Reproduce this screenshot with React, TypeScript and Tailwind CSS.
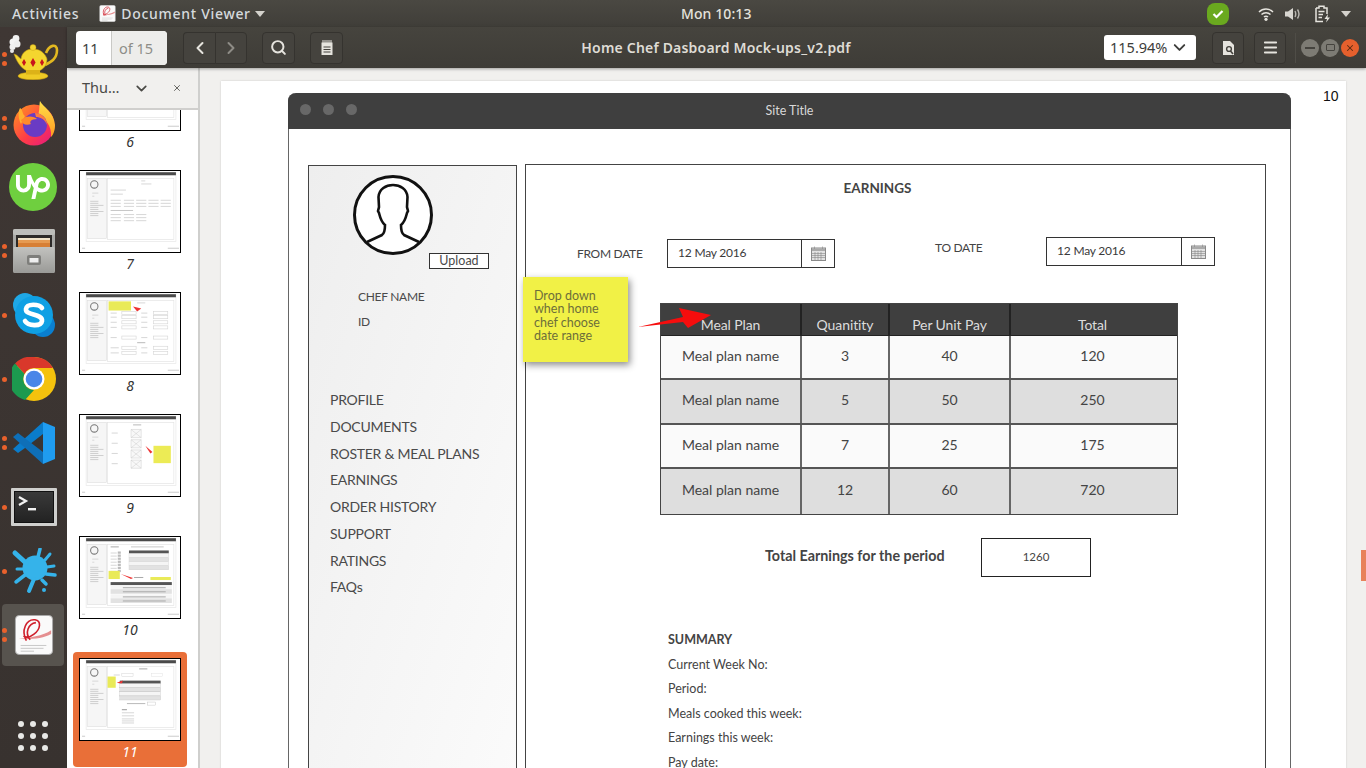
import React from "react";
import { ChevronLeft, ChevronRight, ChevronDown, Search, Menu, X } from "lucide-react";
import { SiUpwork } from "react-icons/si";

const Dots = ({ n }: { n: number }) => (
  <div className="absolute left-[2px] top-0 bottom-0 flex flex-col justify-center gap-[4px]">
    {Array.from({ length: n }).map((_, i) => (
      <span key={i} className="block w-[5px] h-[5px] rounded-full bg-[#e9612c]" />
    ))}
  </div>
);

const Teapot = () => (
  <svg width="50" height="45" viewBox="0 0 50 45" className="mb-[3px]">
    <path d="M37 18 C40 10 48 8 48 15 C48 24 42 27 36 30" fill="none" stroke="#e3b820" strokeWidth="2.6" />
    <path d="M5 19 C9 20 10 23 12 24 C13 17 18 14 24 14 C31 14 36 18 38 24 C38 32 32 37 24 37 C15 37 9 30 5 19Z" fill="#f4d62f" stroke="#c49a10" strokeWidth=".6" />
    <ellipse cx="24" cy="41" rx="15" ry="3.8" fill="#efca25" stroke="#c49a10" strokeWidth=".6" />
    <rect x="17" y="35" width="14" height="4.5" fill="#dcb218" />
    <circle cx="24" cy="12.5" r="3" fill="#f2d432" stroke="#c49a10" strokeWidth=".4" />
    <path d="M15 24l2 3.5-2 3.5-2-3.5zM24 23l2.6 4.5-2.6 4.5-2.6-4.5zM33 24l2 3.5-2 3.5-2-3.5z" fill="#c8141c" />
    <circle cx="7" cy="3.5" r="3.4" fill="#f2f2f2" /><circle cx="4" cy="7" r="3.5" fill="#f4f4f4" /><circle cx="8" cy="9" r="3.5" fill="#eee" /><circle cx="3.5" cy="12" r="3" fill="#f0f0f0" /><circle cx="3" cy="16" r="2" fill="#e8e8e8" />
  </svg>
);

const Firefox = () => (
  <svg width="44" height="46" viewBox="0 0 44 46">
    <defs>
      <linearGradient id="ff" x1="0" y1="0" x2="1" y2="1"><stop offset="0" stopColor="#ff9a1f" /><stop offset=".55" stopColor="#ff3d46" /><stop offset="1" stopColor="#e31587" /></linearGradient>
      <linearGradient id="ffy" x1="0" y1="0" x2="0" y2="1"><stop offset="0" stopColor="#ffe14a" /><stop offset="1" stopColor="#ff9a1f" /></linearGradient>
    </defs>
    <circle cx="22" cy="25" r="20.5" fill="url(#ff)" />
    <path d="M28 1 C31 7 42 12 43 25 C43 31 41 35 39 37 C40 26 33 18 26 15 C28 10 27 5 28 1Z" fill="url(#ffy)" />
    <path d="M8 8 C11 10 10 14 13 16 L9 24 C6 18 6 12 8 8Z" fill="#ffb02e" />
    <circle cx="23" cy="25" r="12" fill="#6a3bc4" />
    <path d="M9 20 C14 15 22 16 25 19 C19 19 17 22 19 24 C14 26 10 24 9 20Z" fill="#ff8a2b" />
    <path d="M23 13 C30 13 35 19 35 25 C33 19 28 17 24 17Z" fill="#ff7a3d" />
  </svg>
);

const Upwork = () => (
  <div className="w-[48px] h-[48px] -ml-[1px] rounded-full bg-[#6fcf3f] flex items-center justify-center">
    <SiUpwork size={34} color="#fff" />
  </div>
);

const Files = () => (
  <svg width="42" height="44" viewBox="0 0 42 44">
    <defs>
      <linearGradient id="fd" x1="0" y1="0" x2="0" y2="1"><stop offset="0" stopColor="#c2c2bf" /><stop offset="1" stopColor="#9a9a97" /></linearGradient>
    </defs>
    <rect x="0" y="0" width="42" height="44" rx="2" fill="#a9a9a6" />
    <rect x="0" y="0" width="42" height="6" rx="2" fill="#bdbdba" />
    <rect x="3" y="6" width="36" height="13" fill="#2d2a28" />
    <rect x="5" y="9" width="32" height="2" fill="#f0e2c8" />
    <rect x="5" y="11" width="32" height="3" fill="#e59a52" />
    <rect x="5" y="14" width="32" height="5" fill="#d77f35" />
    <rect x="0.5" y="18" width="41" height="26" rx="1" fill="url(#fd)" />
    <rect x="14" y="26" width="14" height="10" rx="2" fill="#7e7e7b" />
    <rect x="16.5" y="29" width="9" height="4.5" fill="#eee" />
  </svg>
);

const Skype = () => (
  <svg width="44" height="44" viewBox="0 0 44 44">
    <circle cx="13" cy="12" r="12" fill="#1fa8e6" /><circle cx="31" cy="32" r="12" fill="#0a7fd0" />
    <circle cx="22" cy="22" r="19" fill="#0fa0e4" />
    <path d="M30 15 C27 11 15 10 14 16 C13 23 31 20 30 28 C29 34 16 33 13 28" fill="none" stroke="#fff" strokeWidth="4.6" strokeLinecap="round" />
  </svg>
);

const Chrome = () => (
  <svg width="44" height="44" viewBox="0 0 44 44">
    <circle cx="22" cy="22" r="22" fill="#f4c20d" />
    <path d="M22 0 A22 22 0 0 1 41 11 L22 11 A11 11 0 0 0 12.5 17 L3 6.5 A22 22 0 0 1 22 0Z" fill="#d9382b" />
    <path d="M3 6.5 L12.5 17 A11 11 0 0 0 22 33 L13 43 A22 22 0 0 1 3 6.5Z" fill="#1c9a4f" />
    <circle cx="22" cy="22" r="10.5" fill="#fff" /><circle cx="22" cy="22" r="8.3" fill="#4a86e8" />
  </svg>
);

const VSCode = () => (
  <svg width="42" height="42" viewBox="0 0 42 42">
    <path d="M30 0 L42 5 L42 37 L30 42 L30 30 L30 12Z" fill="#1f9cf0" />
    <path d="M30 0 L30 12 L12 26 L5 31 L0 27 L30 0Z" fill="#0a7ccb" />
    <path d="M0 15 L5 11 L30 30 L30 42 L0 15Z" fill="#0e6fb8" />
  </svg>
);

const Terminal = () => (
  <svg width="46" height="38" viewBox="0 0 46 38">
    <defs>
      <linearGradient id="tm" x1="0" y1="0" x2="0" y2="1"><stop offset="0" stopColor="#3a3a3a" /><stop offset="1" stopColor="#222" /></linearGradient>
    </defs>
    <rect width="46" height="38" rx="1" fill="#cfcfcd" />
    <rect x="3.5" y="3.5" width="39" height="31" fill="url(#tm)" stroke="#111" />
    <path d="M8 9 L15 13 L8 17" fill="none" stroke="#f2f2f2" strokeWidth="2.2" />
    <rect x="17" y="20" width="8" height="2.4" fill="#f2f2f2" />
  </svg>
);

const Splash = () => (
  <svg width="46" height="46" viewBox="0 0 46 46">
    <circle cx="24" cy="20" r="12.5" fill="#35b3ea" />
    <g stroke="#35b3ea" strokeLinecap="round" fill="none">
      <path d="M15 15 L4 5" strokeWidth="5" /><path d="M27 9 L29 1" strokeWidth="3.5" /><path d="M34 12 L39 6" strokeWidth="3" /><path d="M36 19 L43 18" strokeWidth="3" /><path d="M35 26 L44 27" strokeWidth="3.5" /><path d="M31 32 L35 36" strokeWidth="3.5" /><path d="M23 31 L18 43" strokeWidth="4" /><path d="M14 27 L5 34" strokeWidth="3.5" /><path d="M12 21 L6 21" strokeWidth="3" />
    </g>
    <circle cx="33" cy="42" r="2" fill="#35b3ea" />
  </svg>
);

const Evince = ({ size = 40 }: { size?: number }) => (
  <svg width={size} height={size} viewBox="0 0 40 42">
    <rect x=".5" y=".5" width="39" height="41" rx="4" fill="#fafafa" stroke="#aaa" />
    <path d="M4 25 C14 24 30 22 38 16 L38 20 C30 25 14 26 4 25Z" fill="#e58f90" />
    <path d="M12 27 C6 16 12 4 21 5 C28 6 27 15 20 20 C15 24 12 24 9 22 M22 8 C14 9 10 19 16 26" fill="none" stroke="#cf1f2b" strokeWidth="1.7" />
    <path d="M6 32 H33 M6 35 H30 M6 38 H20" stroke="#c6c6c6" />
  </svg>
);

const DockItem = ({ dots, active, children }: { dots: number; active?: boolean; children: React.ReactNode }) => (
  <div className="relative flex items-center justify-center h-[64px] w-full">
    {active && <div className="absolute left-[2px] right-[3px] top-[1px] bottom-[1px] rounded-[4px] bg-[#57534e]" />}
    <div className="relative flex items-center justify-center">{children}</div>
    {dots > 0 && <Dots n={dots} />}
  </div>
);

const Dock = () => (
  <aside className="w-[67px] shrink-0 h-full bg-linear-to-b from-[#3f3734] to-[#38322f] flex flex-col">
    <DockItem dots={2}><Teapot /></DockItem>
    <DockItem dots={2}><Firefox /></DockItem>
    <DockItem dots={0}><Upwork /></DockItem>
    <DockItem dots={2}><Files /></DockItem>
    <DockItem dots={1}><Skype /></DockItem>
    <DockItem dots={1}><Chrome /></DockItem>
    <DockItem dots={2}><VSCode /></DockItem>
    <DockItem dots={1}><Terminal /></DockItem>
    <DockItem dots={1}><Splash /></DockItem>
    <DockItem dots={2} active><Evince /></DockItem>
    <div className="mt-auto mb-[17px] grid grid-cols-3 gap-[6px] w-[30px] ml-[18px]">
      {Array.from({ length: 9 }).map((_, i) => (
        <span key={i} className="block w-[6px] h-[6px] rounded-full bg-[#e8e8e6]" />
      ))}
    </div>
  </aside>
);

const TopBar = () => (
  <header className="h-[27px] shrink-0 bg-linear-to-b from-[#4a4842] to-[#403e39] flex items-center text-[#dfdbd2] text-[14px] font-medium tracking-[0.7px] font-['Noto_Sans',sans-serif] relative">
    <span className="ml-[12px] text-[#d6dadd]">Activities</span>
    <span className="ml-[20px] flex items-center"><span className="block w-[17px] h-[17px]"><Evince size={17} /></span></span>
    <span className="ml-[5px] text-[#d6dadd]">Document Viewer</span>
    <svg width="10" height="6" viewBox="0 0 10 6" className="ml-[4px]"><path d="M0 0H10L5 6Z" fill="#d4d2cc" /></svg>
    <span className="absolute left-[681px] tracking-[0.1px] text-[#e4e2dc]">Mon 10:13</span>
    <div className="ml-auto flex items-center">
      <span className="w-[22px] h-[22px] rounded-[8px] bg-[#6aa91f] flex items-center justify-center">
        <svg width="12" height="10" viewBox="0 0 12 10"><path d="M1.5 5 L4.5 8 L10.5 2" fill="none" stroke="#fff" strokeWidth="2.2" /></svg>
      </span>
      <svg width="16" height="14" viewBox="0 0 16 14" className="ml-[29px]">
        <path d="M1 5 C5 1 11 1 15 5 M3.5 7.5 C6 5 10 5 12.5 7.5 M6 10 C7 9 9 9 10 10" fill="none" stroke="#e6e4de" strokeWidth="1.5" />
        <circle cx="8" cy="12.3" r="1.6" fill="#e6e4de" />
      </svg>
      <svg width="16" height="14" viewBox="0 0 16 14" className="ml-[11px]">
        <path d="M0 4.5H3L8 1V13L3 9.5H0Z" fill="#d8d6d0" />
        <path d="M10 4 C11 6 11 8 10 10 M12.5 2.5 C14.5 5.5 14.5 8.5 12.5 11.5" fill="none" stroke="#b9b7b1" strokeWidth="1.4" />
      </svg>
      <svg width="16" height="18" viewBox="0 0 16 18" className="ml-[14px]">
        <path d="M1 3H4V1.2H9V3H12V9M1 3V16.5H8" fill="none" stroke="#e6e4de" strokeWidth="1.5" />
        <path d="M3.5 6.5H9.5M3.5 9.5H8M3.5 12.5H7" stroke="#e6e4de" strokeWidth="1.3" />
        <path d="M13 9 L9.5 14 H12 L11 17.5 L15 12.5 H12.5Z" fill="#e6e4de" />
      </svg>
      <svg width="10" height="6" viewBox="0 0 10 6" className="ml-[10px] mr-[15px]"><path d="M0 0H10L5 6Z" fill="#d4d2cc" /></svg>
    </div>
  </header>
);

const ToolBtn = ({ className = "", children }: { className?: string; children: React.ReactNode }) => (
  <div className={"h-[32px] rounded-[4px] border border-[#35332f] bg-[#45433e] flex items-center justify-center " + className}>{children}</div>
);

const Toolbar = () => (
  <div className="h-[41px] shrink-0 bg-linear-to-b from-[#46443e] to-[#3e3c37] flex items-center font-['Noto_Sans',sans-serif] relative z-20 shadow-[0_1px_3px_rgba(0,0,0,0.35)] text-[#e6e4de]">
    <div className="ml-[9px] w-[91px] h-[34px] rounded-[4px] bg-white flex overflow-hidden text-[14.5px]">
      <span className="w-[36px] pl-[6px] leading-[34px] text-[#3d3d3a] border-r border-[#c9c9c6]">11</span>
      <span className="flex-1 pl-[7px] leading-[34px] bg-[#ededeb] text-[#8d8d88]">of 15</span>
    </div>
    <div className="ml-[16px] flex">
      <ToolBtn className="w-[32px] rounded-r-none border-r-0"><ChevronLeft size={20} strokeWidth={2.4} /></ToolBtn>
      <ToolBtn className="w-[32px] rounded-l-none"><ChevronRight size={20} strokeWidth={2.4} color="#8e8c86" /></ToolBtn>
    </div>
    <ToolBtn className="ml-[15px] w-[33px]"><Search size={17} strokeWidth={2.8} /></ToolBtn>
    <ToolBtn className="ml-[15px] w-[33px]">
      <svg width="14" height="16" viewBox="0 0 14 16"><path d="M1.5 2.5H12.5V15H1.5Z" fill="#e6e4de" /><path d="M3 0V4M5 0V4M7 0V4M9 0V4M11 0V4" stroke="#e6e4de" /><path d="M3.5 7H10.5M3.5 9.5H10.5M3.5 12H10.5" stroke="#45433e" /></svg>
    </ToolBtn>
    <span className="absolute left-[449px] w-[400px] whitespace-nowrap text-center text-[#dfdcd5] text-[14px] font-semibold tracking-[0.2px]">Home Chef Dasboard Mock-ups_v2.pdf</span>
    <div className="ml-auto flex items-center">
      <div className="w-[92px] h-[25px] bg-white rounded-[3px] flex items-center pl-[6px] pr-[7px] text-[14.5px] text-[#3d3d3a]">
        <span>115.94%</span><ChevronDown size={19} strokeWidth={2.4} className="ml-auto" />
      </div>
      <ToolBtn className="ml-[16px] w-[32px]">
        <svg width="13" height="16" viewBox="0 0 13 16"><path d="M1 1H8L12 5V15H1Z" fill="#e6e4de" /><circle cx="7" cy="9" r="2.4" fill="none" stroke="#45433e" strokeWidth="1.4" /><path d="M8.5 11 L11 14" stroke="#45433e" strokeWidth="1.6" /></svg>
      </ToolBtn>
      <ToolBtn className="ml-[10px] w-[32px]"><Menu size={17} strokeWidth={2.6} /></ToolBtn>
      <span className="ml-[9px] w-px h-[30px] bg-[#4f4d47]" />
      <span className="ml-[5px] w-[18px] h-[18px] rounded-full bg-[#7d7b74] flex items-center justify-center"><span className="block w-[10px] h-[2px] bg-[#45433e]" /></span>
      <span className="ml-[2px] w-[18px] h-[18px] rounded-full bg-[#7d7b74] flex items-center justify-center"><span className="block w-[9px] h-[7px] border border-[#45433e] rounded-[1px]" /></span>
      <span className="ml-[2px] mr-[7px] w-[18px] h-[18px] rounded-full bg-[#e5602d] flex items-center justify-center"><X size={10} strokeWidth={2.5} color="#5a2a12" /></span>
    </div>
  </div>
);

const R = ({ x, y, w, h = 1, c = "#d8d8d8" }: { x: number; y: number; w: number; h?: number; c?: string }) => (
  <rect x={x} y={y} width={w} height={h} fill={c} />
);

const ThumbBody = ({ n }: { n: number }) => {
  if (n === 7)
    return (
      <g>
        <R x={60} y={9} w={4} /><R x={60} y={12} w={10} />
        <R x={30} y={18} w={15} /><R x={30} y={22} w={12} />
        {[28, 31, 34].map((y) => <g key={y}>{[30, 43, 55, 67, 79].map((x) => <R key={x} x={x} y={y} w={10} />)}</g>)}
        <R x={30} y={38} w={22} c="#c8c8c8" />
        {[42, 45, 48].map((y) => <g key={y}>{[30, 43, 55].map((x) => <R key={x} x={x} y={y} w={10} />)}</g>)}
      </g>
    );
  if (n === 8)
    return (
      <g>
        <rect x="28" y="8" width="22" height="9" fill="#e9ea58" />
        <path d="M52 13 L60 15 L56 18Z" fill="#e33" />
        <R x={56} y={9} w={8} />
        {[19, 23, 28, 33, 43].map((y) => <g key={y}><R x={30} y={y} w={6} /><rect x="41" y={y - 1} width="14" height="3" fill="none" stroke="#d5d5d5" strokeWidth=".6" /><R x={60} y={y} w={6} /><rect x="72" y={y - 1} width="14" height="3" fill="none" stroke="#d5d5d5" strokeWidth=".6" /></g>)}
        <R x={56} y={48} w={8} c="#bbb" />
        {[53, 58].map((y) => <g key={y}><R x={30} y={y} w={8} /><rect x="41" y={y - 1} width="14" height="3" fill="none" stroke="#d5d5d5" strokeWidth=".6" /><R x={60} y={y} w={6} /><rect x="72" y={y - 1} width="14" height="3" fill="none" stroke="#d5d5d5" strokeWidth=".6" /></g>)}
      </g>
    );
  if (n === 9)
    return (
      <g>
        <R x={52} y={9} w={8} c="#bbb" />
        {[14, 24, 34, 44].map((y) => (
          <g key={y}>
            <R x={31} y={y + 3} w={6} />
            <path d={`M50 ${y}h10v8h-10zM50 ${y}l10 8M60 ${y}l-10 8`} fill="#f8f8f8" stroke="#c4c4c4" strokeWidth=".4" />
          </g>
        ))}
        <path d="M64 30 L71 36 L69 37.5Z" fill="#e33" />
        <rect x="72" y="30" width="17" height="17" fill="#eceb55" />
      </g>
    );
  if (n === 10)
    return (
      <g>
        <R x={30} y={9} w={8} c="#aaa" />
        {[15, 18, 21, 24, 27, 30, 33].map((y) => <g key={y}><R x={30} y={y} w={6} /><rect x="37" y={y - 1} width="3" height="2.2" fill="#bbb" /></g>)}
        <R x={50} y={9} w={32} c="#c8c8c8" />
        <rect x="48" y="13" width="39" height="3" fill="#555" />
        {[16, 20, 24, 28].map((y, i) => <rect key={y} x="48" y={y} width="39" height="4" fill={i % 2 ? "#e2e2e2" : "#f5f5f5"} stroke="#ccc" strokeWidth=".3" />)}
        <rect x="28" y="33" width="11" height="8" fill="#e9ea58" />
        <path d="M40 36 L52 40 L50 41Z" fill="#e33" />
        <R x={53} y={39} w={9} c="#aaa" />
        <rect x="69" y="39" width="20" height="3" fill="#e9ea58" />
        <rect x="30" y="44" width="60" height="3" fill="#555" />
        {[47, 51, 56, 60].map((y, i) => <g key={y}><rect x="30" y={y} width="60" height="4.5" fill={i % 2 ? "#e2e2e2" : "#f5f5f5"} /><R x={42} y={y + 2} w={42} c="#aaa" /></g>)}
      </g>
    );
  if (n === 11)
    return (
      <g>
        <R x={58} y={9} w={8} c="#aaa" />
        <R x={33} y={15} w={6} /><rect x="41" y="14" width="11" height="3" fill="#fff" stroke="#ccc" strokeWidth=".4" />
        <rect x="70" y="14" width="11" height="3" fill="#fff" stroke="#ddd" strokeWidth=".4" />
        <rect x="27" y="17" width="8" height="11" fill="#e9ea58" />
        <rect x="39" y="21" width="40" height="3" fill="#555" />
        <path d="M36 23 L42 21 L41 24Z" fill="#e33" />
        {[24, 28, 32, 36].map((y, i) => <rect key={y} x="39" y={y} width="40" height="4" fill={i % 2 ? "#e2e2e2" : "#f5f5f5"} stroke="#bbb" strokeWidth=".3" />)}
        <R x={46} y={43} w={18} c="#bbb" /><rect x="66" y="42" width="8" height="3" fill="#fff" stroke="#bbb" strokeWidth=".4" />
        <R x={41} y={49} w={5} c="#999" />{[52, 55, 58, 60, 62].map((y) => <R key={y} x={41} y={y} w={12} />)}
      </g>
    );
  return null;
};

const Thumb = ({ n, active }: { n: number; active?: boolean }) => (
  <div className={"mx-[6px] w-[114px] h-[115px] rounded-[4px] pt-[6px] " + (active ? "bg-[#e96f38]" : "")}>
    <div className="mx-[6px] w-[102px] h-[83px] border border-black bg-white overflow-hidden">
      <svg width="100" height="81" viewBox="0 0 98 79" className="block blur-[0.4px]">
        <rect x="6" y="1" width="88" height="68" fill="#fff" stroke="#e8e8e8" strokeWidth=".7" />
        <rect x="6" y="1" width="88" height="3" fill="#4a4a4a" />
        <rect x="7" y="7" width="19" height="59" fill="#f6f6f6" stroke="#d8d8d8" strokeWidth=".5" />
        <rect x="27" y="7" width="65" height="60" fill="#fff" stroke="#e0e0e0" strokeWidth=".6" />
        <circle cx="14" cy="13" r="3.6" fill="none" stroke="#777" />
        <R x={12} y={21} w={6} /><R x={12} y={24} w={2} />
        {[29, 31, 33, 35, 37, 39, 41, 43].map((y, i) => <R key={y} x={10} y={y} w={i % 3 === 2 ? 13 : 8} c="#cfcfcf" />)}
        <R x={2} y={75} w={3} c="#ccc" /><R x={86} y={75} w={11} c="#ccc" />
        <ThumbBody n={n} />
      </svg>
    </div>
    <div className={"h-[26px] text-center italic text-[14px] leading-[22px] font-['Noto_Sans',sans-serif] " + (active ? "text-white" : "text-[#333]")}>{n}</div>
  </div>
);

const Sidebar = () => (
  <div className="w-[133px] shrink-0 h-full bg-white border-r-2 border-[#cfcfcd] flex flex-col overflow-hidden">
    <div className="relative z-10 h-[42px] shrink-0 bg-[#f1f0ee] border-b-2 border-[#d0cfcd] flex items-center text-[#4a4a46] font-['Noto_Sans',sans-serif] text-[14.5px]">
      <span className="ml-[15px]">Thu…</span>
      <ChevronDown size={17} strokeWidth={2.4} className="ml-[14px]" />
      <X size={10} strokeWidth={2} className="ml-[22px]" />
    </div>
    <div className="-mt-[68px] flex flex-col gap-[7px]">
      {[6, 7, 8, 9, 10, 11].map((n) => <Thumb key={n} n={n} active={n === 11} />)}
    </div>
  </div>
);

const Avatar = () => (
  <svg width="80" height="80" viewBox="0 0 80 80" className="block">
    <circle cx="40" cy="40" r="38.5" fill="#fff" stroke="#111" strokeWidth="3" />
    <path d="M14 67 L29 60 C32 58 32 54 32 50 C28 47 27 42 26 38 L25 36 L26 32 L25.5 22 C26 14 33 10 40 10 C47 10 54 14 54.5 22 L54 32 L55 36 L54 38 C53 42 52 47 48 50 C48 54 48 58 51 60 L66 67" fill="none" stroke="#111" strokeWidth="2.6" />
  </svg>
);

const menu = ["PROFILE", "DOCUMENTS", "ROSTER & MEAL PLANS", "EARNINGS", "ORDER HISTORY", "SUPPORT", "RATINGS", "FAQs"];

const LeftPanel = () => (
  <div className="w-[209px] h-[640px] mt-[1px] shrink-0 border border-[#444] bg-linear-to-br from-[#eeeeee] to-[#fbfbfb] flex flex-col text-[#4a4a4a]">
    <div className="ml-[44px] mt-[9px]"><Avatar /></div>
    <div className="-mt-[2px] ml-[120px] w-[60px] h-[16px] border border-[#333] bg-white text-[12.5px] leading-[14px] text-center">Upload</div>
    <div className="mt-[20px] ml-[49px] text-[12px] tracking-[-0.3px] leading-[16px]">CHEF NAME</div>
    <div className="mt-[9px] ml-[49px] text-[12px] tracking-[-0.3px] leading-[16px]">ID</div>
    <div className="mt-[57px] ml-[21px] flex flex-col text-[14px] tracking-[-0.25px] leading-[26.75px]">
      {menu.map((m) => <span key={m}>{m}</span>)}
    </div>
  </div>
);

const CalIcon = () => (
  <svg width="15" height="15" viewBox="0 0 15 15">
    <rect x=".5" y="2" width="14" height="12.5" fill="#e2e2e2" stroke="#8a8a8a" />
    <rect x="1" y="2.5" width="13" height="2.5" fill="#aaa" />
    <path d="M3.5 0.5V3M11.5 0.5V3M1 7.5H14M1 9.5H14M1 11.5H14M4 6V14M7 6V14M10 6V14" stroke="#888" strokeWidth=".6" />
  </svg>
);

const DateBox = ({ className }: { className: string }) => (
  <div className={"h-[29px] border border-[#333] bg-white flex items-center text-[12px] tracking-[-0.2px] text-[#3a3a3a] " + className}>
    <span className="ml-[10px] pb-[2px]">12 May 2016</span>
    <div className="ml-auto w-[33px] h-full border-l border-[#333] flex items-center justify-center"><CalIcon /></div>
  </div>
);

const rows = [
  { h: "h-[44px]", bg: "bg-[#fafafa]", v: ["Meal plan name", "3", "40", "120"] },
  { h: "h-[45px]", bg: "bg-[#dedede]", v: ["Meal plan name", "5", "50", "250"] },
  { h: "h-[44px]", bg: "bg-[#fafafa]", v: ["Meal plan name", "7", "25", "175"] },
  { h: "h-[45px]", bg: "bg-[#dedede]", v: ["Meal plan name", "12", "60", "720"] },
];
const cols = ["w-[141px]", "w-[88px]", "w-[121px]", "flex-1 pr-[3px]"];

const Table = () => (
  <div className="ml-[134px] mt-[35px] w-[518px] border border-[#444] text-[14px] text-[#444]">
    <div className="h-[32px] flex bg-[#3f3f3f] text-[#dcdcdc] border-b border-[#222] tracking-[-0.1px]">
      {["Meal Plan", "Quanitity", "Per Unit Pay", "Total"].map((t, i) => (
        <div key={t} className={cols[i] + " h-full flex items-end justify-center leading-[20px] " + (i < 3 ? "border-r-2 border-[#222]" : "")}>{t}</div>
      ))}
    </div>
    {rows.map((r, ri) => (
      <div key={ri} className={"flex " + r.h + " " + r.bg + (ri < 3 ? " border-b-2 border-[#555]" : "")}>
        {r.v.map((t, i) => (
          <div key={i} className={cols[i] + " h-full flex items-center justify-center pb-[4px] " + (i < 3 ? "border-r-2 border-[#666]" : "")}>{t}</div>
        ))}
      </div>
    ))}
  </div>
);

const RightPanel = () => (
  <div className="relative w-[741px] h-[640px] shrink-0 border border-[#444] bg-white text-[#444]">
    <div className="mt-[13px] pr-[36px] text-center text-[13.5px] leading-[20px] font-bold">EARNINGS</div>
    <div className="mt-[39px] flex items-start h-[31px]">
      <span className="ml-[51px] mt-[9px] w-[90px] text-[12px] tracking-[-0.3px] leading-[16px]">FROM DATE</span>
      <DateBox className="mt-[2px] w-[168px]" />
      <span className="ml-[100px] mt-[3px] w-[111px] text-[12px] tracking-[-0.3px] leading-[16px]">TO DATE</span>
      <DateBox className="w-[169px]" />
    </div>
    <Table />
    <div className="mt-[23px] flex items-center h-[39px]">
      <span className="ml-[239px] w-[216px] pb-[3px] font-bold text-[14.3px]">Total Earnings for the period</span>
      <div className="w-[110px] h-[39px] border border-[#222] flex items-center justify-center pb-[1px] text-[11.5px]">1260</div>
    </div>
    <div className="mt-[51px] ml-[142px] flex flex-col text-[12.5px] leading-[24.5px]">
      <span className="font-bold">SUMMARY</span>
      <span>Current Week No:</span>
      <span>Period:</span>
      <span>Meals cooked this week:</span>
      <span>Earnings this week:</span>
      <span>Pay date:</span>
    </div>
    <div className="absolute left-[-3px] top-[112px] w-[105px] h-[85px] bg-[#f1f146] shadow-[2px_3px_7px_rgba(0,0,0,0.45)] pl-[11px] pt-[12px] text-[12.5px] leading-[13.4px] text-[#6d6e3a]">
      Drop down<br />when home<br />chef choose<br />date range
    </div>
    <svg width="74" height="20" viewBox="0 0 74 20" className="absolute left-[112px] top-[143px]">
      <path d="M0 19 L45 9 L41 0 L73 7 L50 20 L45 14Z" fill="#f60d0d" />
    </svg>
  </div>
);

const MockWindow = () => (
  <div className="w-[1003px] shrink-0 border-x border-[#666] rounded-t-[8px] font-['Lato',sans-serif]">
    <div className="h-[36px] -mx-px rounded-t-[8px] bg-[#3f3f3f] flex items-center relative">
      <span className="ml-[12px] mb-[4px] w-[11px] h-[11px] rounded-full bg-[#686868]" />
      <span className="ml-[12px] mb-[4px] w-[11px] h-[11px] rounded-full bg-[#686868]" />
      <span className="ml-[12px] mb-[4px] w-[11px] h-[11px] rounded-full bg-[#686868]" />
      <span className="absolute left-0 right-0 text-center text-[12.5px] text-[#d8d8d8]">Site Title</span>
    </div>
    <div className="pt-[35px] pl-[19px] flex gap-[8px] items-start">
      <LeftPanel />
      <RightPanel />
    </div>
  </div>
);

const DocArea = () => (
  <main className="relative flex-1 min-w-0 h-full bg-[#f1f0ee] overflow-hidden">
    <div className="ml-[21px] mt-[13px] w-[1125px] h-[800px] bg-white shadow-[0_0_2px_rgba(0,0,0,0.15)] pl-[67px] pt-[12px] flex items-start">
      <MockWindow />
      <span className="ml-[32px] mt-[-5px] text-[14px] leading-[16px] text-[#111] font-['Liberation_Sans',sans-serif]">10</span>
    </div>
    <div className="absolute right-0 top-[482px] w-[5px] h-[31px] bg-[#e8825a]" />
  </main>
);

export default function App() {
  return (
    <div className="w-[1366px] h-[768px] overflow-hidden flex flex-col bg-[#3e3634]">
      <TopBar />
      <div className="flex-1 min-h-0 flex">
        <Dock />
        <div className="flex-1 min-w-0 flex flex-col">
          <Toolbar />
          <div className="flex-1 min-h-0 flex">
            <Sidebar />
            <DocArea />
          </div>
        </div>
      </div>
    </div>
  );
}
